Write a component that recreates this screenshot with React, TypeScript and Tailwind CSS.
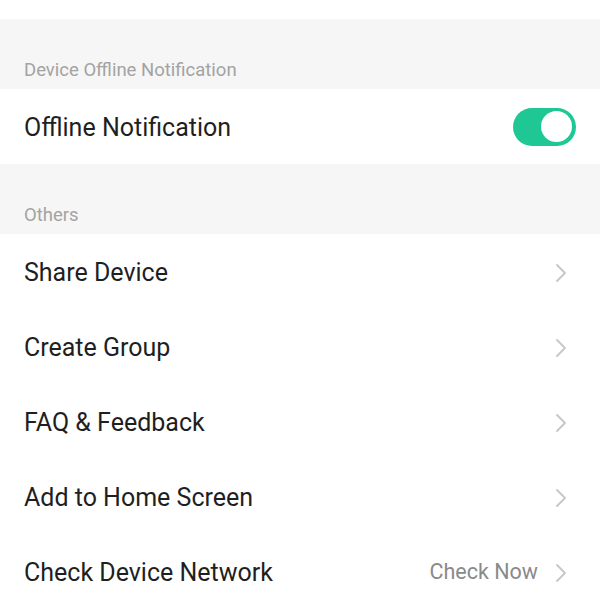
import { FC } from "react";

const Chevron: FC = () => (
  <svg width="12" height="20" viewBox="0 0 12 20" fill="none" className="shrink-0">
    <path d="M2 2l8 8-8 8" stroke="#c6c6c6" strokeWidth="1.8" strokeLinecap="round" strokeLinejoin="round" />
  </svg>
);

const SectionHeader: FC<{ title: string }> = ({ title }) => (
  <div className="flex h-[70px] items-end bg-[#f6f6f6] px-6 pb-[10px]">
    <span className="text-[18.5px] leading-none text-[#a3a3a3]">{title}</span>
  </div>
);

const LinkRow: FC<{ label: string; value?: string }> = ({ label, value }) => (
  <div className="flex h-[75px] items-center justify-between bg-white pl-6 pr-[33px] pt-[2px]">
    <span className="text-[25px] text-[#1f1f1f]">{label}</span>
    <div className="flex items-center gap-[17px]">
      {value && <span className="text-[21.5px] text-[#8a8a8a]">{value}</span>}
      <Chevron />
    </div>
  </div>
);

const App: FC = () => {
  return (
    <div className="h-[600px] w-[600px] overflow-hidden bg-white font-['Roboto',sans-serif]">
      <div className="h-[19px] bg-white" />
      <SectionHeader title="Device Offline Notification" />
      <div className="flex h-[75px] items-center justify-between bg-white pl-6 pr-6">
        <span className="pt-[2px] text-[25px] text-[#1f1f1f]">Offline Notification</span>
        <div className="flex h-[38px] w-[63px] items-center justify-end rounded-full bg-[#1ec794] pr-[4px]">
          <div className="h-[31px] w-[31px] rounded-full bg-white" />
        </div>
      </div>
      <SectionHeader title="Others" />
      <LinkRow label="Share Device" />
      <LinkRow label="Create Group" />
      <LinkRow label="FAQ & Feedback" />
      <LinkRow label="Add to Home Screen" />
      <LinkRow label="Check Device Network" value="Check Now" />
    </div>
  );
};

export default App;
